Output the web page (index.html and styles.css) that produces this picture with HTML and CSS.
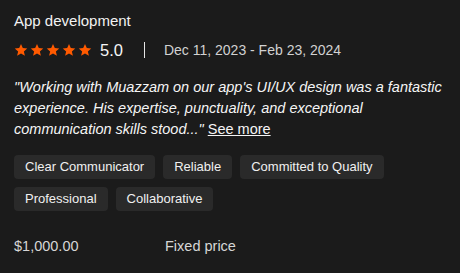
FILE: index.html
```html
<!DOCTYPE html>
<html>
<head>
<meta charset="utf-8">
<link rel="stylesheet" href="styles.css">
</head>
<body>
<div class="card">
  <div class="title">App development</div>
  <div class="meta">
    <div class="stars">
      <svg viewBox="0 0 24 24" class="star"><path d="M12 1.5l3.1 7.1 7.6.7-5.8 5.1 1.8 7.6L12 18l-6.7 4 1.8-7.6L1.3 9.3l7.6-.7z"/></svg>
      <svg viewBox="0 0 24 24" class="star"><path d="M12 1.5l3.1 7.1 7.6.7-5.8 5.1 1.8 7.6L12 18l-6.7 4 1.8-7.6L1.3 9.3l7.6-.7z"/></svg>
      <svg viewBox="0 0 24 24" class="star"><path d="M12 1.5l3.1 7.1 7.6.7-5.8 5.1 1.8 7.6L12 18l-6.7 4 1.8-7.6L1.3 9.3l7.6-.7z"/></svg>
      <svg viewBox="0 0 24 24" class="star"><path d="M12 1.5l3.1 7.1 7.6.7-5.8 5.1 1.8 7.6L12 18l-6.7 4 1.8-7.6L1.3 9.3l7.6-.7z"/></svg>
      <svg viewBox="0 0 24 24" class="star"><path d="M12 1.5l3.1 7.1 7.6.7-5.8 5.1 1.8 7.6L12 18l-6.7 4 1.8-7.6L1.3 9.3l7.6-.7z"/></svg>
    </div>
    <span class="score">5.0</span>
    <span class="divider"></span>
    <span class="dates">Dec 11, 2023 - Feb 23, 2024</span>
  </div>
  <p class="quote"><em>"Working with Muazzam on our app's UI/UX design was a fantastic experience. His expertise, punctuality, and exceptional communication skills stood..."</em> <a class="more" href="#">See more</a></p>
  <div class="tags">
    <span class="tag">Clear Communicator</span>
    <span class="tag">Reliable</span>
    <span class="tag">Committed to Quality</span>
    <span class="tag">Professional</span>
    <span class="tag">Collaborative</span>
  </div>
  <div class="price-row">
    <span class="price">$1,000.00</span>
    <span class="ptype">Fixed price</span>
  </div>
</div>
</body>
</html>
```

FILE: styles.css
```css
html, body {
  margin: 0;
  padding: 0;
  background: #1b1b1b;
}
body {
  font-family: "Liberation Sans", Arial, sans-serif;
  color: #f2f2f2;
}
.card {
  padding: 11px 14px 0 14px;
}
.title {
  font-size: 15px;
  line-height: 20px;
  color: #f2f2f2;
}
.meta {
  display: flex;
  align-items: center;
  margin-top: 9px;
  height: 20px;
}
.stars {
  display: flex;
  gap: 2px;
}
.star {
  width: 14px;
  height: 14px;
  fill: #ff5a00;
}
.score {
  font-size: 16.5px;
  margin-left: 8px;
  color: #f5f5f5;
}
.divider {
  width: 1px;
  height: 16px;
  background: #e6e6e6;
  margin-left: 21px;
  margin-right: 19px;
}
.dates {
  font-size: 14px;
  color: #d2d2d2;
}
.quote {
  margin: 17px 0 0 0;
  font-size: 14.5px;
  line-height: 21px;
  color: #f5f5f5;
}
.more {
  color: #f5f5f5;
  text-decoration: underline;
}
.tags {
  display: flex;
  flex-wrap: wrap;
  gap: 8px;
  margin-top: 15px;
  width: 380px;
}
.tag {
  background: #2a2a2a;
  border-radius: 4px;
  font-size: 13px;
  line-height: 24px;
  padding: 0 11px;
  color: #f0f0f0;
}
.price-row {
  display: flex;
  margin-top: 26px;
  font-size: 14.5px;
  line-height: 18px;
  color: #d6d6d6;
}
.price {
  width: 151px;
}
```
